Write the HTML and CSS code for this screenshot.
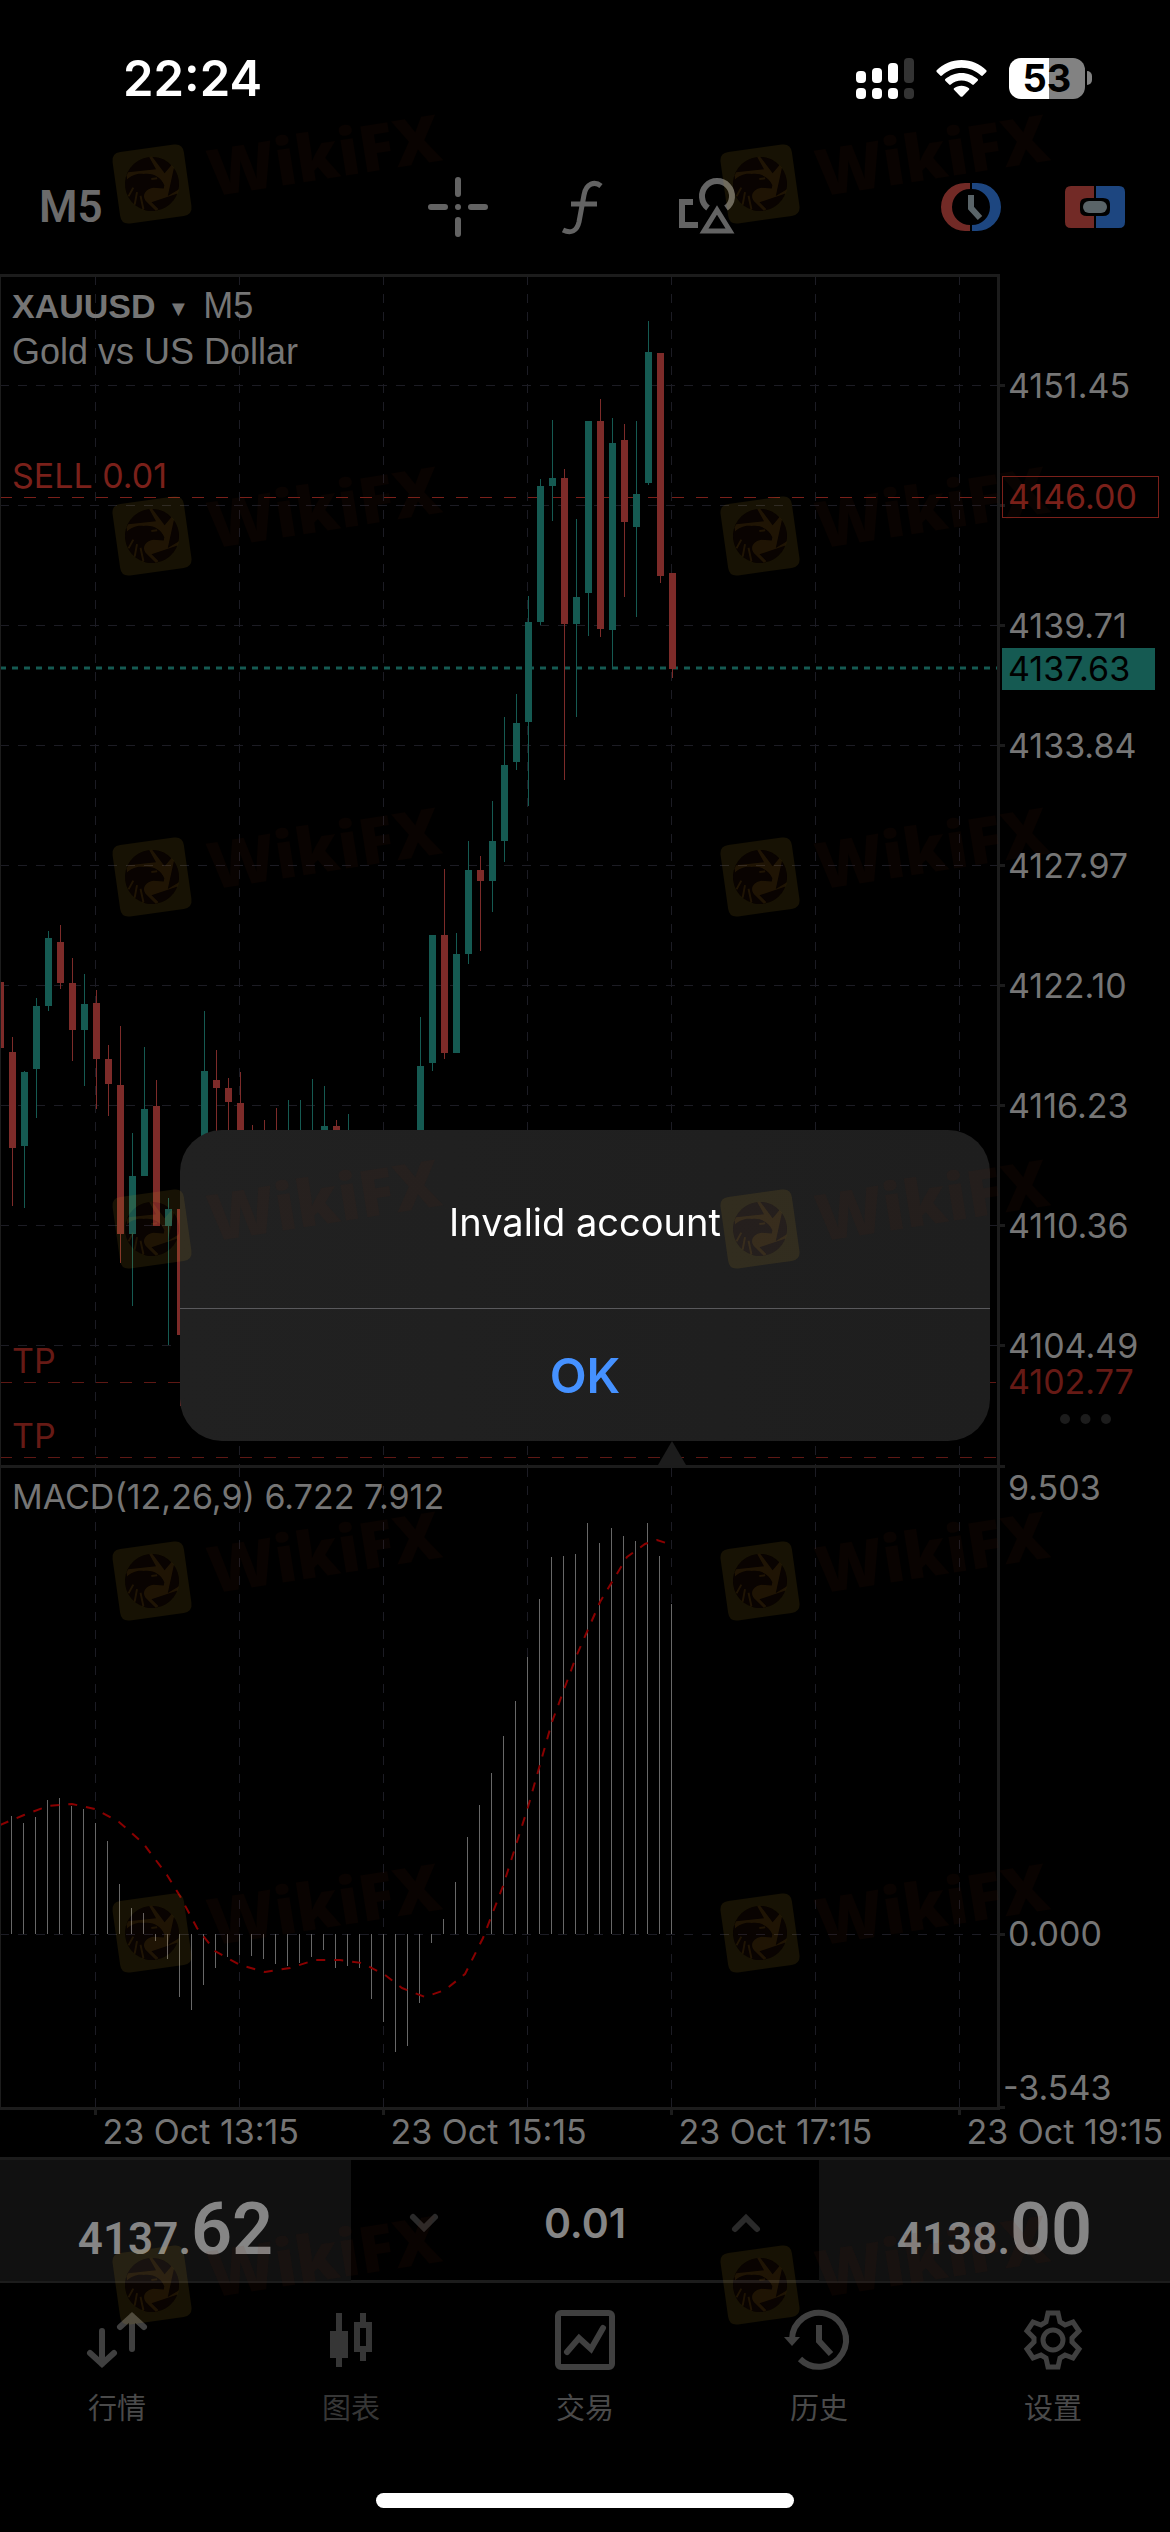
FILE: index.html
```html
<!DOCTYPE html>
<html lang="zh-CN">
<head>
  <meta charset="UTF-8">
  <meta name="viewport" content="width=device-width, initial-scale=1">
  <title>XAUUSD M5</title>
  <link rel="stylesheet" href="styles.css">
</head>
<body>
  <div class="status-bar">
    <span class="time">22:24</span>
    <div class="status-icons">
      <svg width="58" height="41" viewBox="0 0 58 41" fill="#fff">
        <rect x="0" y="13" width="10" height="12" rx="4"/>
        <rect x="16" y="10" width="10" height="15" rx="4"/>
        <rect x="32" y="5" width="10" height="20" rx="4"/>
        <rect x="48" y="0" width="10" height="25" rx="4" fill="#333"/>
        <rect x="0" y="30" width="10" height="11" rx="4"/>
        <rect x="16" y="30" width="10" height="11" rx="4"/>
        <rect x="32" y="30" width="10" height="11" rx="4"/>
        <rect x="48" y="30" width="10" height="11" rx="4" fill="#333"/>
      </svg>
      <svg width="51" height="37" viewBox="0 0 51 37" fill="#fff">
        <path d="M25.500 0C35 0 44 4 50.300 10.200Q51 11 50.300 11.900L46.500 15.800Q45.800 16.300 45 15.600C39.700 10.600 33 7.700 25.500 7.700S11.300 10.600 6 15.600Q5.200 16.300 4.500 15.800L.700 11.900Q0 11 .700 10.200C7 4 16 0 25.500 0Z"/>
        <path d="M25.500 12.900C31.600 12.900 37.400 15.300 41.700 19.100Q42.400 19.900 41.700 20.700L37.800 24.600Q37 25.200 36.200 24.500C33.300 22 29.600 20.600 25.500 20.600S17.700 22 14.800 24.500Q14 25.200 13.200 24.600L9.300 20.700Q8.600 19.900 9.300 19.100C13.600 15.300 19.400 12.900 25.500 12.900Z"/>
        <path d="M25.500 25.700C28.400 25.700 31 26.700 33 28.300Q33.700 29 33 29.800L26.500 36.400Q25.500 37.300 24.500 36.400L18 29.800Q17.300 29 18 28.300C20 26.700 22.600 25.700 25.500 25.700Z"/>
      </svg>
      <span class="battery"><span class="battery-level">53</span></span>
    </div>
  </div>

  <div class="toolbar">
    <button class="tool timeframe">M5</button>
    <div class="tools">
      <button class="tool" aria-label="Crosshair">
        <svg width="60" height="60" viewBox="0 0 60 60" stroke="#636363" stroke-width="6" stroke-linecap="round">
          <path d="M30 3V17M30 43V57M3 30H17M43 30H57M30 30V30"/>
        </svg>
      </button>
      <button class="tool" aria-label="Indicators">
        <svg width="60" height="60" viewBox="0 0 60 60" fill="none" stroke="#636363" stroke-width="5">
          <path d="M49 9C43 4 34 6 32 18L27 45C25 54 19 57 11 53M19 27H45"/>
        </svg>
      </button>
      <button class="tool" aria-label="Objects">
        <svg width="60" height="60" viewBox="0 0 60 60" fill="none" stroke="#636363" stroke-width="6">
          <path d="M17 25H6V48H22"/>
          <path d="M32 31A15 15 0 1 1 50 31"/>
          <path d="M41 33L28 54H54Z" stroke-width="5"/>
        </svg>
      </button>
    </div>
    <div class="tools-right">
      <button class="tool" aria-label="History mode">
        <svg width="60" height="60" viewBox="0 0 60 60">
          <path fill="#722a26" d="M29 6H24A24 24 0 0 0 24 54H29V48A18 18 0 0 1 29 12Z"/>
          <path fill="#1d4680" d="M31 6H36A24 24 0 0 1 36 54H31V48A18 18 0 0 0 31 12Z"/>
          <path fill="none" stroke="#5a6468" stroke-width="6" d="M30 18V31L39 41"/>
        </svg>
      </button>
      <button class="tool" aria-label="One click trading">
        <svg width="60" height="60" viewBox="0 0 60 60">
          <path fill="#722a26" d="M6 9H29V21H22Q15 21 15 27V33Q15 39 22 39H29V51H6Q0 51 0 45V15Q0 9 6 9Z"/>
          <path fill="#1d4680" d="M54 9H31V21H38Q45 21 45 27V33Q45 39 38 39H31V51H54Q60 51 60 45V15Q60 9 54 9Z"/>
          <rect x="18" y="24" width="24" height="12" rx="6" fill="#5a6468"/>
        </svg>
      </button>
    </div>
  </div>

  <div class="chart">
    <svg id="chart" viewBox="0 274 1170 1883"></svg>
    <div class="symbol">
      <button class="symbol-name"><b>XAUUSD</b><span class="arrow">▼</span>M5</button>
      <div>Gold vs US Dollar</div>
    </div>
  </div>

  <div class="trade-bar">
    <button class="price">4137.<span class="big">62</span></button>
    <div class="volume">
      <button class="step" aria-label="Less">
        <svg width="28" height="18" viewBox="0 0 28 18"><path d="M3 3L14 14L25 3"/></svg>
      </button>
      <input type="text" value="0.01" aria-label="Volume">
      <button class="step" aria-label="More">
        <svg width="28" height="18" viewBox="0 0 28 18"><path d="M3 15L14 4L25 15"/></svg>
      </button>
    </div>
    <button class="price">4138.<span class="big">00</span></button>
  </div>

  <nav class="tabs">
    <a href="#quotes">
      <svg viewBox="0 0 60 60" stroke-linecap="round" stroke-width="6">
        <path d="M15 21V54M3 43L15 54L27 43M45 39V6M33 17L45 6L57 17"/>
      </svg>
      行情
    </a>
    <a href="#charts" class="active">
      <svg viewBox="0 0 60 60" stroke-width="6">
        <path d="M18 3V57M42 3V15M42 42V51"/>
        <path d="M9 21H27V48H9Z" fill="#363636" stroke="none"/>
        <path d="M36 15H48V39H36Z"/>
      </svg>
      图表
    </a>
    <a href="#trade">
      <svg viewBox="0 0 60 60" stroke-width="6">
        <rect x="3" y="3" width="54" height="54" rx="3"/>
        <path d="M12 42L24 28L36 39L48 18" stroke-linecap="round"/>
      </svg>
      交易
    </a>
    <a href="#history">
      <svg viewBox="0 0 60 60" stroke-width="6">
        <path d="M3 29A27 27 0 1 1 11 49M30 15V31L42 44"/>
        <path d="M-5 27H11L3 36Z" fill="#404040" stroke="none"/>
      </svg>
      历史
    </a>
    <a href="#settings">
      <svg viewBox="0 0 60 60" stroke-width="5">
        <path d="M25 3H35L37 12L42 15L50 12L56 21L49 28V32L56 39L50 48L42 45L37 48L35 57H25L23 48L18 45L10 48L4 39L11 32V28L4 21L10 12L18 15L23 12Z"/>
        <circle cx="30" cy="30" r="10"/>
      </svg>
      设置
    </a>
  </nav>
  <div class="home-indicator"></div>

  <div class="overlay">
    <div class="dialog" role="alertdialog" aria-labelledby="msg">
      <p id="msg">Invalid account</p>
      <button class="ok">OK</button>
    </div>
  </div>

  <svg class="watermark" viewBox="0 0 1170 2532">
    <defs>
      <g id="mark">
        <g transform="rotate(-8)">
          <path class="gold" fill-rule="evenodd" d="M-27 -36H27Q36 -36 36 -27V27Q36 36 27 36H-27Q-36 36 -36 27V-27Q-36 -36 -27 -36ZM-27 0A27 27 0 1 0 27 0A27 27 0 1 0 -27 0Z"/>
          <circle class="brown" r="27"/>
          <path class="gold" d="M-24 -12L-22 -15L6 -14L1 -27L4 -27L14 -9L22 -16L24 -13L14 14L26 9L24 13L-3 18L3 26L0 27L-7 18C-13 11 -8 4 1 4L11 6L12 3C10 -5 3 -11 -7 -11C-13 -13 -20 -11 -24 -8Z"/>
          <path class="slits" d="M-25 9L-19 1M-20 18L-16 6M-12 24L-13 10M0 -5H6"/>
        </g>
        <text class="brown" x="57" y="22" transform="rotate(-9)">WikiFX</text>
      </g>
    </defs>
    <g id="marks"></g>
  </svg>

  <script src="chart.js"></script>
</body>
</html>
```
FILE: styles.css
```css
* {
  box-sizing: border-box;
}
body {
  margin: 0;
  min-height: 100vh;
  display: flex;
  flex-direction: column;
  position: relative;
  background: #000;
  color: #757575;
  font-family: Inter, "Noto Sans CJK SC", sans-serif;
  overflow-x: hidden;
}
button {
  padding: 0;
  border: none;
  background: none;
  color: inherit;
  font: inherit;
  cursor: pointer;
}
svg {
  display: block;
  overflow: visible;
}

/* status bar */
.status-bar {
  height: 140px;
  padding: 16px 78px 0 123px;
  display: flex;
  align-items: center;
  justify-content: space-between;
  color: #fff;
}
.time {
  font-size: 49px;
  font-weight: 600;
}
.status-icons {
  display: flex;
  align-items: center;
  gap: 22px;
}
.battery {
  display: flex;
  align-items: center;
}
.battery::after {
  content: "";
  width: 5px;
  height: 14px;
  margin-left: 2px;
  border-radius: 0 5px 5px 0;
  background: #828282;
}
.battery-level {
  width: 76px;
  height: 41px;
  border-radius: 12px;
  background: linear-gradient(90deg, #fff 53%, #828282 53%);
  color: #000;
  font-size: 38px;
  font-weight: 700;
  line-height: 41px;
  text-align: center;
}

/* toolbar */
.toolbar {
  height: 134px;
  padding: 0 45px 0 39px;
  display: grid;
  grid-template-columns: 1fr auto 1fr;
  align-items: center;
}
.timeframe {
  justify-self: start;
  font-family: Roboto, sans-serif;
  font-size: 44px;
  font-weight: 600;
  color: #6b6b6b;
}
.tools,
.tools-right {
  display: flex;
  gap: 64px;
}
.tools-right {
  justify-content: flex-end;
}

/* chart */
.chart {
  position: relative;
}
#chart {
  width: 100%;
  height: auto;
  font-size: 34px;
  fill: #757575;
  overflow: hidden;
}
.symbol {
  position: absolute;
  top: 10px;
  left: 12px;
  font-family: "Liberation Sans", sans-serif;
  font-size: 36px;
  line-height: 43px;
}
.symbol-name {
  display: block;
}
.symbol-name b {
  font-size: 34px;
}
.symbol .arrow {
  margin: 0 14px 0 12px;
  font-size: 22px;
  vertical-align: 2px;
}
.grid {
  stroke: #1c1c24;
  stroke-dasharray: 9 9;
}
.frame {
  fill: none;
  stroke: #1c1c1c;
  stroke-width: 3;
}
.level {
  stroke: #7a201a;
  stroke-dasharray: 12 12;
}
.level.tp {
  stroke: #5e1814;
}
.bid {
  stroke: #155a52;
  stroke-width: 3;
  stroke-dasharray: 6 6;
}
.sell {
  fill: #7a201a;
}
.tp-text {
  fill: #661a15;
}
.up {
  fill: #155a52;
}
.down {
  fill: #7d2b29;
}
.macd {
  stroke: #686868;
}
.signal {
  fill: none;
  stroke: #8a0000;
  stroke-width: 2;
  stroke-dasharray: 9 9;
}

/* buy / sell row */
.trade-bar {
  height: 126px;
  display: grid;
  grid-template-columns: 3fr 4fr 3fr;
  border-top: 3px solid #1c1c1c;
  border-bottom: 3px solid #1c1c1c;
}
.price {
  padding-top: 28px;
  background: #111;
  color: #858585;
  font-family: "Liberation Sans Narrow", Roboto, sans-serif;
  font-size: 44px;
  font-weight: 600;
  line-height: 84px;
}
.price .big {
  font-size: 72px;
}
.volume {
  display: flex;
  align-items: center;
  justify-content: space-between;
  padding: 4px 59px 0;
}
.volume input {
  width: 200px;
  border: none;
  background: none;
  color: #858585;
  font: 600 41px Inter, sans-serif;
  text-align: center;
}
.step svg {
  fill: none;
  stroke: #2a2a2a;
  stroke-width: 6;
  stroke-linecap: round;
}

/* bottom tabs */
.tabs {
  display: grid;
  grid-template-columns: repeat(5, 1fr);
  padding-top: 27px;
}
.tabs a {
  display: flex;
  flex-direction: column;
  align-items: center;
  gap: 18px;
  color: #4a4a4a;
  font-size: 29px;
  line-height: 42px;
  text-decoration: none;
}
.tabs a.active {
  color: #363636;
}
.tabs svg {
  width: 60px;
  height: 60px;
  fill: none;
  stroke: #404040;
}
.tabs .active svg {
  stroke: #363636;
}
.home-indicator {
  width: 418px;
  height: 15px;
  margin: auto auto 24px;
  border-radius: 8px;
  background: #fff;
}

/* alert, kept between the safe areas */
.overlay {
  position: fixed;
  inset: 0;
  padding: 141px 0 102px;
  display: flex;
  align-items: center;
  justify-content: center;
}
.dialog {
  width: 810px;
  max-width: 90%;
  border-radius: 42px;
  background: linear-gradient(90deg, #212121, #1e1e1e);
  overflow: hidden;
}
.dialog p {
  margin: 0;
  padding: 68px 24px 62px;
  color: #fff;
  font-size: 38px;
  line-height: 48px;
  text-align: center;
}
.ok {
  display: block;
  width: 100%;
  height: 133px;
  border-top: 1px solid #59595c;
  color: #4591ff;
  font-size: 48px;
  font-weight: 600;
}

/* watermark */
.watermark {
  position: absolute;
  top: 0;
  left: 0;
  width: 100%;
  pointer-events: none;
}
.watermark text {
  font: 800 65px "Open Sans", sans-serif;
}
.gold {
  fill: rgba(230, 180, 40, 0.1);
}
.brown {
  fill: rgba(120, 40, 10, 0.08);
}
.slits {
  fill: none;
  stroke: rgba(230, 180, 40, 0.1);
  stroke-width: 2;
}
```
FILE: chart.js
```js
const NS = 'http://www.w3.org/2000/svg';
const chart = document.getElementById('chart');

function add(tag, attrs, text, parent) {
  const el = document.createElementNS(NS, tag);
  for (const k in attrs) el.setAttribute(k, attrs[k]);
  if (text) el.textContent = text;
  (parent || chart).appendChild(el);
  return el;
}
function line(x1, y1, x2, y2, cls) {
  add('path', { d: `M${x1} ${y1}L${x2} ${y2}`, class: cls });
}

// [index, high, top, bottom, low, up]
const candles = [
  [-1, 982, 982, 1048, 1048, 0], [0, 1037, 1052, 1148, 1206, 0], [1, 1071, 1072, 1146, 1208, 1],
  [2, 998, 1006, 1069, 1118, 1], [3, 931, 938, 1006, 1011, 1], [4, 925, 942, 983, 989, 0],
  [5, 958, 983, 1030, 1061, 0], [6, 974, 1004, 1030, 1086, 1], [7, 990, 1003, 1059, 1109, 0],
  [8, 1045, 1059, 1084, 1116, 0], [9, 1026, 1085, 1234, 1263, 0], [10, 1133, 1176, 1234, 1306, 1],
  [11, 1047, 1109, 1176, 1176, 1], [12, 1080, 1106, 1226, 1226, 0], [13, 1198, 1209, 1226, 1345, 1],
  [14, 1175, 1209, 1335, 1406, 0], [16, 1011, 1071, 1160, 1170, 1], [17, 1050, 1080, 1088, 1150, 0],
  [18, 1078, 1088, 1102, 1150, 0], [19, 1072, 1103, 1150, 1160, 0], [20, 1125, 1140, 1160, 1170, 0],
  [21, 1120, 1140, 1160, 1170, 0], [22, 1108, 1140, 1160, 1170, 0], [23, 1100, 1140, 1160, 1170, 1],
  [24, 1100, 1140, 1160, 1170, 1], [25, 1079, 1140, 1160, 1170, 1], [26, 1086, 1126, 1160, 1170, 1],
  [27, 1120, 1126, 1160, 1170, 0], [28, 1114, 1140, 1160, 1170, 1], [34, 1017, 1066, 1160, 1170, 1],
  [35, 935, 935, 1063, 1071, 1], [36, 869, 935, 1053, 1059, 0], [37, 933, 954, 1053, 1053, 1],
  [38, 841, 870, 954, 964, 1], [39, 856, 870, 881, 951, 0], [40, 801, 841, 881, 912, 1],
  [41, 717, 765, 841, 862, 1], [42, 694, 723, 762, 770, 1], [43, 596, 622, 722, 806, 1],
  [44, 479, 486, 622, 625, 1], [45, 420, 478, 486, 521, 1], [46, 469, 478, 624, 780, 0],
  [47, 519, 597, 624, 717, 1], [48, 421, 421, 593, 636, 1], [49, 399, 421, 629, 637, 0],
  [50, 418, 443, 630, 669, 1], [51, 424, 440, 522, 597, 0], [52, 421, 494, 527, 617, 1],
  [53, 321, 352, 483, 485, 1], [54, 353, 353, 576, 583, 0], [55, 573, 573, 669, 678, 0]
];

const macd = [
  1816, 1823, 1817, 1800, 1798, 1806, 1809, 1823, 1841, 1884, 1908, 1913, 1941, 1959, 1997, 2010,
  1985, 1968, 1957, 1955, 1956, 1959, 1964, 1966, 1963, 1957, 1950, 1968, 1966, 1968, 1999, 2022,
  2052, 2046, 2003, 1943, 1919, 1882, 1837, 1805, 1773, 1736, 1701, 1657, 1599, 1557, 1556, 1554,
  1523, 1543, 1528, 1536, 1541, 1523, 1556, 1604
];

const signal = [
  [0, 1825], [24, 1815], [48, 1806], [72, 1804], [95, 1809], [119, 1822], [143, 1843], [167, 1875],
  [180, 1896], [197, 1928], [215, 1951], [240, 1965], [265, 1972], [290, 1968], [315, 1960],
  [340, 1960], [362, 1963], [385, 1975], [402, 1988], [425, 1997], [445, 1990], [465, 1974],
  [483, 1938], [503, 1886], [528, 1807], [552, 1722], [576, 1657], [600, 1602], [627, 1557],
  [645, 1544], [657, 1540], [672, 1545]
];

const prices = ['4151.45', '', '4139.71', '4133.84', '4127.97', '4122.10', '4116.23', '4110.36', '4104.49'];
const dates = ['23 Oct 13:15', '23 Oct 15:15', '23 Oct 17:15', '23 Oct 19:15'];

// grid
for (let x = 95.5; x < 998; x += 144) {
  line(x, 276, x, 1465, 'grid');
  line(x, 1468, x, 2107, 'grid');
}
prices.forEach((p, i) => {
  const y = 385.5 + i * 120;
  line(0, y, 998, y, 'grid');
  line(998, y, 1005, y, 'frame');
  add('text', { x: 1008, y: y + 12 }, p);
});
line(0, 1934.5, 998, 1934.5, 'grid');

// orders
line(0, 497.5, 998, 497.5, 'level');
line(0, 1382.5, 998, 1382.5, 'level tp');
line(0, 1457.5, 998, 1457.5, 'level tp');
add('text', { x: 12, y: 488, class: 'sell' }, 'SELL 0.01');
add('text', { x: 12, y: 1373, class: 'tp-text' }, 'TP');
add('text', { x: 12, y: 1448, class: 'tp-text' }, 'TP');
add('text', { x: 1008, y: 1394, class: 'tp-text' }, '4102.77');
line(0, 668, 998, 668, 'bid');

// candles
candles.forEach(([i, high, top, bottom, low, up]) => {
  const x = 12 + i * 12;
  const cls = up ? 'up' : 'down';
  add('rect', { x: x, y: high, width: 1, height: low - high, class: cls });
  add('rect', { x: x - 3, y: top, width: 7, height: bottom - top, class: cls });
});

// macd
macd.forEach((y, i) => line(11.5 + i * 12, 1934, 11.5 + i * 12, y, 'macd'));
add('path', { d: 'M' + signal.map(p => p.join(' ')).join('L'), class: 'signal' });
add('text', { x: 12, y: 1509 }, 'MACD(12,26,9) 6.722 7.912');
add('text', { x: 1008, y: 1500 }, '9.503');
add('text', { x: 1008, y: 1946 }, '0.000');
add('text', { x: 1003, y: 2100 }, '-3.543');

// frame
add('path', { d: 'M0 275.500H998.500V2108.500H0M0 1466.500H1005M998 1934.500H1005M998 2107.500H1005', class: 'frame' });
add('path', { d: 'M0 276H1V2108H0Z', fill: '#1c1c1c' });
add('path', { d: 'M672 1441L686 1465H658Z', fill: '#1c1c1c' });
[1065, 1085.5, 1106].forEach(x => add('circle', { cx: x, cy: 1419, r: 5, fill: '#1c1c1c' }));

// price tags
add('rect', { x: 1002.5, y: 476.5, width: 156, height: 41, fill: 'none', stroke: '#7a201a' });
add('text', { x: 1008, y: 509, class: 'sell' }, '4146.00');
add('rect', { x: 1002, y: 648, width: 153, height: 42, class: 'up' });
add('text', { x: 1008, y: 681, fill: '#000' }, '4137.63');

dates.forEach((d, i) => {
  const x = 95.5 + i * 288;
  line(x, 2108, x, 2115, 'frame');
  add('text', { x: x + 7, y: 2144 }, d);
});

// watermark rows
[184, 536, 877, 1229, 1581, 1933, 2285].forEach(y => {
  [152, 760].forEach(x => add('use', { href: '#mark', x: x, y: y }, '', document.getElementById('marks')));
});
```
